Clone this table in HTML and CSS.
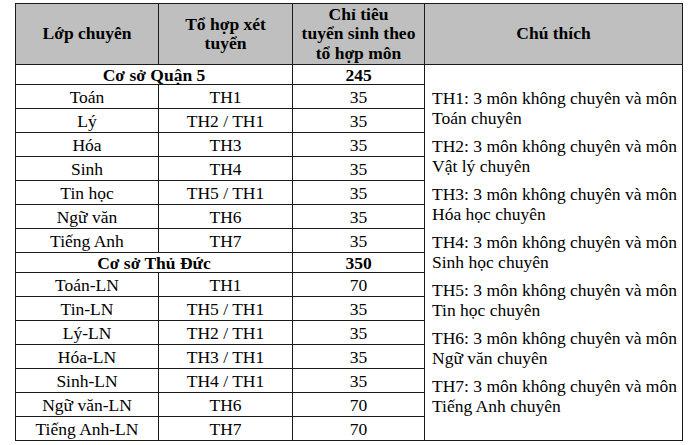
FILE: index.html
```html
<!DOCTYPE html>
<html lang="vi">
<head>
<meta charset="utf-8">
<link rel="stylesheet" href="styles.css">
</head>
<body>
<table class="quota">
  <colgroup>
    <col class="c1"><col class="c2"><col class="c3"><col class="c4">
  </colgroup>
  <thead>
    <tr class="head">
      <th>Lớp chuyên</th>
      <th>Tổ hợp xét<br>tuyển</th>
      <th>Chỉ tiêu<br>tuyển sinh theo<br>tổ hợp môn</th>
      <th>Chú thích</th>
    </tr>
  </thead>
  <tbody>
    <tr class="section">
      <td colspan="2">Cơ sở Quận 5</td>
      <td>245</td>
      <td rowspan="16" class="notes">
        <p>TH1: 3 môn không chuyên và môn<br>Toán chuyên</p>
        <p>TH2: 3 môn không chuyên và môn<br>Vật lý chuyên</p>
        <p>TH3: 3 môn không chuyên và môn<br>Hóa học chuyên</p>
        <p>TH4: 3 môn không chuyên và môn<br>Sinh học chuyên</p>
        <p>TH5: 3 môn không chuyên và môn<br>Tin học chuyên</p>
        <p>TH6: 3 môn không chuyên và môn<br>Ngữ văn chuyên</p>
        <p>TH7: 3 môn không chuyên và môn<br>Tiếng Anh chuyên</p>
      </td>
    </tr>
    <tr class="row"><td>Toán</td><td>TH1</td><td>35</td></tr>
    <tr class="row"><td>Lý</td><td>TH2 / TH1</td><td>35</td></tr>
    <tr class="row"><td>Hóa</td><td>TH3</td><td>35</td></tr>
    <tr class="row"><td>Sinh</td><td>TH4</td><td>35</td></tr>
    <tr class="row"><td>Tin học</td><td>TH5 / TH1</td><td>35</td></tr>
    <tr class="row"><td>Ngữ văn</td><td>TH6</td><td>35</td></tr>
    <tr class="row"><td>Tiếng Anh</td><td>TH7</td><td>35</td></tr>
    <tr class="section">
      <td colspan="2">Cơ sở Thủ Đức</td>
      <td>350</td>
    </tr>
    <tr class="row"><td>Toán-LN</td><td>TH1</td><td>70</td></tr>
    <tr class="row"><td>Tin-LN</td><td>TH5 / TH1</td><td>35</td></tr>
    <tr class="row"><td>Lý-LN</td><td>TH2 / TH1</td><td>35</td></tr>
    <tr class="row"><td>Hóa-LN</td><td>TH3 / TH1</td><td>35</td></tr>
    <tr class="row"><td>Sinh-LN</td><td>TH4 / TH1</td><td>35</td></tr>
    <tr class="row"><td>Ngữ văn-LN</td><td>TH6</td><td>70</td></tr>
    <tr class="row"><td>Tiếng Anh-LN</td><td>TH7</td><td>70</td></tr>
  </tbody>
</table>
</body>
</html>
```
FILE: styles.css
```css
html, body {
  margin: 0;
  background: #ffffff;
}
body {
  padding: 3px 0 0 15px;
  font-family: "Liberation Serif", serif;
  font-size: 17.5px;
  color: #000;
}
.quota {
  border-collapse: collapse;
  table-layout: fixed;
  width: 667px;
}
.c1 { width: 143px; }
.c2 { width: 134px; }
.c3 { width: 132px; }
.c4 { width: 258px; }
.quota th, .quota td {
  border: 1px solid #1a1a1a;
  padding: 0 4px;
  text-align: center;
  vertical-align: middle;
  line-height: 19.5px;
}
.head th {
  background: #bfbfbf;
  font-weight: bold;
  height: 60px;
}
.section td {
  font-weight: bold;
  height: 19px;
  line-height: 18px;
}
.row td {
  height: 23px;
  line-height: 20px;
}
.quota td.notes {
  text-align: left;
  vertical-align: middle;
  padding: 0 4px 0 7px;
  font-weight: normal;
  line-height: 19.5px;
}
.notes p {
  margin: 0 0 9px 0;
}
.notes p:last-child {
  margin-bottom: 0;
}
```
